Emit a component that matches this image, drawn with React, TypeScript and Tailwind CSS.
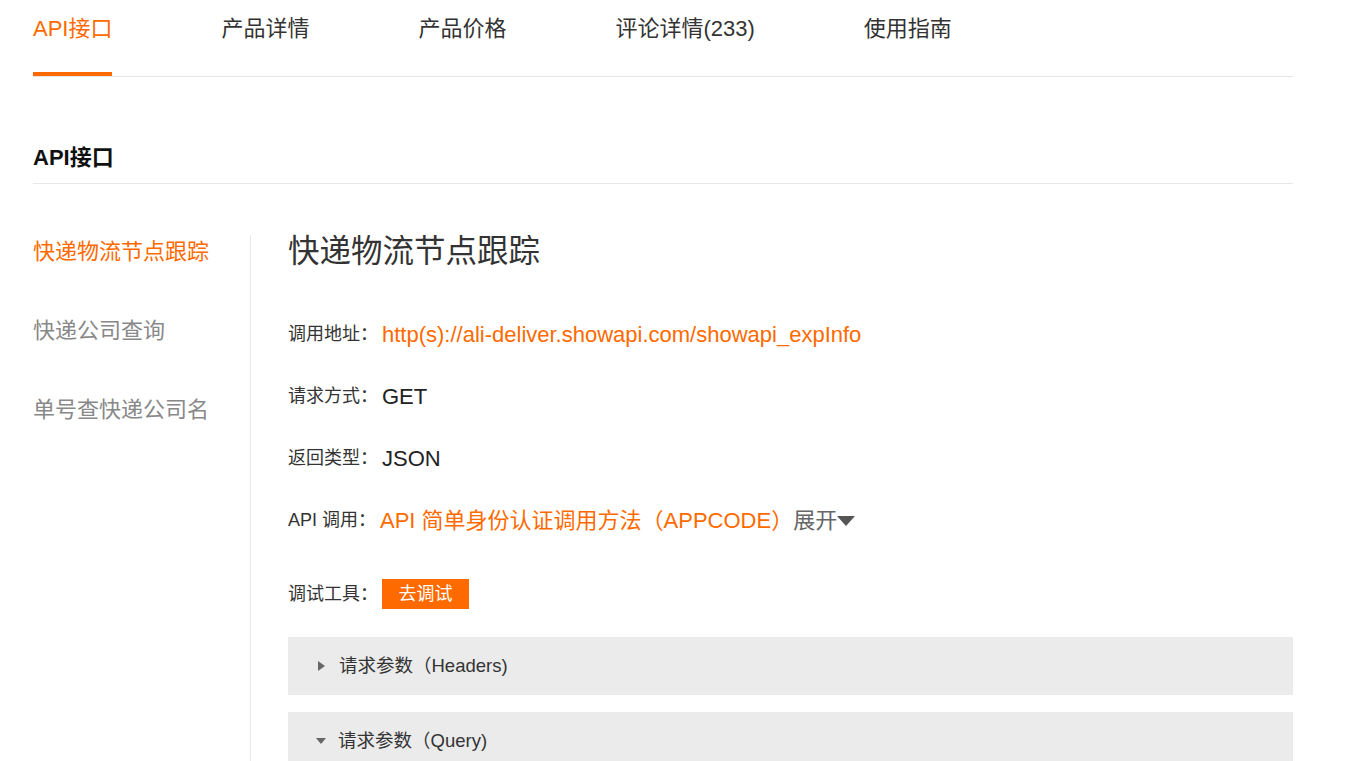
import { ReactNode } from 'react'

const tabs = ['API接口', '产品详情', '产品价格', '评论详情(233)', '使用指南']
const apis = ['快递物流节点跟踪', '快递公司查询', '单号查快递公司名']

type RowProps = {
  label: string
  children: ReactNode
  className?: string
}

const Row = ({ label, children, className = 'h-[62px]' }: RowProps) => (
  <div className={`flex items-center ${className}`}>
    <span className="text-[18px] text-[#333]">{label}</span>
    <div className="ml-[4px] flex items-center">{children}</div>
  </div>
)

const Panel = ({ title, open }: { title: string; open?: boolean }) => (
  <div className="flex h-[58px] items-center bg-[#ebebeb] pl-[30px]">
    {open ? (
      <svg width="10" height="6" viewBox="0 0 10 6" className="-ml-[2px] mr-[12px]">
        <polygon points="0,0 10,0 5,6" fill="#666" />
      </svg>
    ) : (
      <svg width="7" height="10" viewBox="0 0 7 10" className="mr-[14px]">
        <polygon points="0,0 7,5 0,10" fill="#666" />
      </svg>
    )}
    <span className="text-[18.5px] text-[#333]">{title}</span>
  </div>
)

export default function App() {
  return (
    <div className="h-[761px] w-[1347px] overflow-hidden bg-white font-['Liberation_Sans','Noto_Sans_CJK_SC',sans-serif]">
      <div className="ml-[33px] w-[1260px]">
        {/* tabs */}
        <div className="flex h-[77px] gap-[109px] border-b border-[#e5e5e5]">
          {tabs.map((tab, i) => (
            <div
              key={tab}
              className={`h-[76px] pt-[12px] text-[22px] leading-[33px] ${
                i === 0
                  ? 'border-b-4 border-[#ff6a00] text-[#ff6a00]'
                  : 'text-[#333]'
              }`}
            >
              {tab}
            </div>
          ))}
        </div>

        <div className="border-b border-[#e8e8e8] pt-[64px] pb-[9px] text-[22px] font-bold leading-[33px] text-[#111]">
          API接口
        </div>

        <div className="mt-[51px] flex">
          {/* left menu */}
          <div className="flex w-[218px] flex-col gap-[46px] border-r border-[#e8e8e8]">
            {apis.map((name, i) => (
              <div
                key={name}
                className={`text-[22px] leading-[33px] ${
                  i === 0 ? 'text-[#ff6a00]' : 'text-[#888]'
                }`}
              >
                {name}
              </div>
            ))}
          </div>

          {/* detail */}
          <div className="flex-1 pl-[37px]">
            <h2 className="text-[31.5px] leading-[32px] text-[#333]">快递物流节点跟踪</h2>

            <div className="mt-[36px]">
              <Row label="调用地址：">
                <span className="text-[22px] text-[#ff6a00]">
                  http(s)://ali-deliver.showapi.com/showapi_expInfo
                </span>
              </Row>
              <Row label="请求方式：">
                <span className="text-[22px] text-[#222]">GET</span>
              </Row>
              <Row label="返回类型：">
                <span className="text-[22px] text-[#222]">JSON</span>
              </Row>
              <Row label="API 调用：">
                <span className="text-[22px] text-[#ff6a00]">
                  API 简单身份认证调用方法（APPCODE）
                </span>
                <span className="text-[22px] text-[#666]">展开</span>
                <svg width="18" height="10" viewBox="0 0 18 10" className="mt-[1px]">
                  <polygon points="0,0 18,0 9,10" fill="#555" />
                </svg>
              </Row>
              <Row label="调试工具：" className="h-[86px]">
                <button className="flex h-[30px] w-[87px] items-center justify-center bg-[#ff6a00] text-[18px] text-white">
                  去调试
                </button>
              </Row>
            </div>

            <div className="flex flex-col gap-[17px]">
              <Panel title="请求参数（Headers)" />
              <Panel title="请求参数（Query)" open />
            </div>
          </div>
        </div>
      </div>
    </div>
  )
}
